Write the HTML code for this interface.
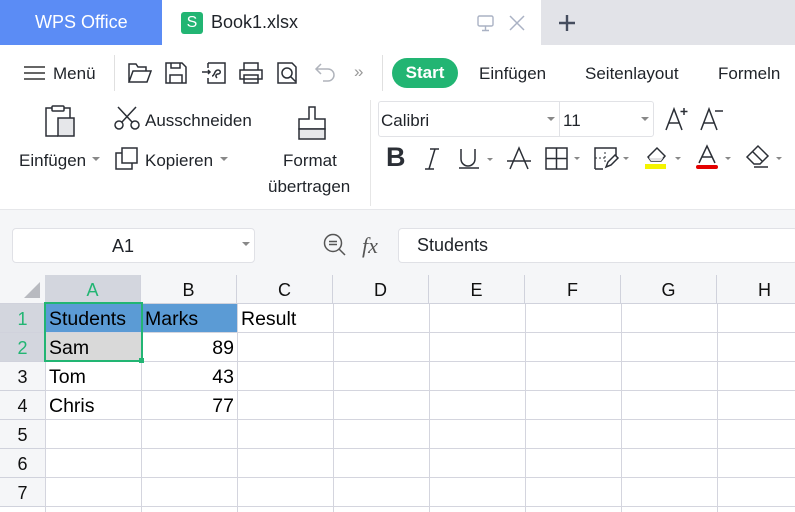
<!DOCTYPE html>
<html><head><meta charset="utf-8"><style>
*{margin:0;padding:0;box-sizing:border-box}
body{width:795px;height:512px;overflow:hidden;background:#fff;font-family:"Liberation Sans",sans-serif;color:#222;position:relative}
.a{position:absolute}
.t{position:absolute;font-size:17px;color:#1f2329;white-space:nowrap}
svg{position:absolute;overflow:visible}
.ln{fill:none;stroke:#2b2f36;stroke-width:1.5}
.hd{position:absolute;top:275px;height:29px;text-align:center;line-height:31px;font-size:18px;color:#111;border-right:1px solid #d0d2dc;background:#f5f6f8}
.rh{position:absolute;left:0;width:45px;height:29px;text-align:center;line-height:30px;font-size:18px;color:#111;background:#f5f6f8;border-bottom:1px solid #d0d2dc}
.c{position:absolute;font-size:19.5px;color:#000;line-height:29px;height:29px}
</style></head><body>
<div class="a" style="left:0;top:0;width:162px;height:45px;background:#5b8cf5"></div>
<div class="t" style="left:35px;top:12px;color:#fff;font-size:18px">WPS Office</div>
<div class="a" style="left:541px;top:0;width:254px;height:45px;background:#e2e3e8"></div>
<div class="a" style="left:181px;top:12px;width:22px;height:22px;background:#22b573;border-radius:3px;color:#fff;font-size:16px;text-align:center;line-height:22px">S</div>
<div class="t" style="left:211px;top:12px;font-size:18px">Book1.xlsx</div>
<svg style="left:477px;top:15px" width="18" height="18"><rect x="1" y="1" width="15" height="10" rx="1.5" fill="none" stroke="#aab2c4" stroke-width="1.4"/><path d="M8.5 11v4M5 15.5h7" stroke="#aab2c4" stroke-width="1.4"/></svg>
<svg style="left:509px;top:15px" width="16" height="16"><path d="M1 1l14 14M15 1L1 15" stroke="#aab2c4" stroke-width="1.5"/></svg>
<svg style="left:558px;top:14px" width="18" height="18"><path d="M9 1v16M1 9h16" stroke="#454d5e" stroke-width="2.4"/></svg>
<svg style="left:24px;top:66px" width="22" height="14"><path d="M0 1h21M0 7h21M0 13h21" stroke="#333" stroke-width="1.4"/></svg>
<div class="t" style="left:53px;top:64px">Menü</div>
<div class="a" style="left:114px;top:55px;width:1px;height:36px;background:#e0e0e0"></div>
<svg style="left:128px;top:62px" width="24" height="22"><path class="ln" d="M1 20V2h7l2 3h8v4M1 20l4-11h18l-4 11z"/></svg>
<svg style="left:165px;top:62px" width="22" height="22"><path class="ln" d="M1 1h16l4 4v16H1zM5 21v-8h12v8M6 1v5h9V1"/></svg>
<svg style="left:202px;top:62px" width="24" height="22"><path class="ln" d="M6 1h17v20H6v-5M6 6V1M0 10h8M6 8l2 2-2 2M10 14c3 0 2-6 6-6 3 0 3 4 0 4-2 0-3 2-1 4"/></svg>
<svg style="left:239px;top:62px" width="24" height="22"><path class="ln" d="M5 8V1h14v7M1 8h22v9H1zM5 13h14v8H5z"/></svg>
<svg style="left:277px;top:62px" width="24" height="22"><path class="ln" d="M1 1h14l4 4v16H1z"/><circle cx="10" cy="11" r="5" class="ln"/><path class="ln" d="M13.5 14.5l5 5"/></svg>
<svg style="left:314px;top:63px" width="22" height="20"><path d="M7 1L2 6l5 5M2 6h12a6 6 0 010 12H9" fill="none" stroke="#b0b4bc" stroke-width="1.5"/></svg>
<div class="t" style="left:354px;top:62px;color:#999;font-size:17px">»</div>
<div class="a" style="left:382px;top:55px;width:1px;height:36px;background:#e0e0e0"></div>
<div class="a" style="left:392px;top:58px;width:66px;height:30px;border-radius:15px;background:#22b573;color:#fff;font-weight:bold;font-size:17px;text-align:center;line-height:30px">Start</div>
<div class="t" style="left:479px;top:64px">Einfügen</div>
<div class="t" style="left:585px;top:64px">Seitenlayout</div>
<div class="t" style="left:718px;top:64px">Formeln</div>
<svg style="left:44px;top:104px" width="34" height="36"><path class="ln" d="M14 32H2V4h6M20 4h6v10"/><rect x="8" y="2" width="12" height="5" rx="1" class="ln"/><rect x="14" y="14" width="16" height="18" fill="#e6e7ea" stroke="#2b2f36" stroke-width="1.5"/></svg>
<div class="t" style="left:19px;top:151px">Einfügen</div>
<div class="a" style="left:92px;top:157px;border:4px solid transparent;border-top-color:#888"></div>
<svg style="left:114px;top:106px" width="26" height="24"><circle cx="5" cy="19" r="4" class="ln"/><circle cx="21" cy="19" r="4" class="ln"/><path class="ln" d="M8 16L22 1M18 16L4 1"/></svg>
<div class="t" style="left:145px;top:111px">Ausschneiden</div>
<svg style="left:115px;top:147px" width="24" height="24"><rect x="7" y="1" width="15" height="15" fill="#fff" class="ln"/><path class="ln" d="M7 6H1v16h16v-6"/></svg>
<div class="t" style="left:145px;top:151px">Kopieren</div>
<div class="a" style="left:220px;top:157px;border:4px solid transparent;border-top-color:#888"></div>
<svg style="left:295px;top:105px" width="34" height="36"><path class="ln" d="M14 2h6v12h10v10H4V14h10z"/><rect x="4" y="24" width="26" height="10" fill="#e6e7ea" stroke="#2b2f36" stroke-width="1.5"/></svg>
<div class="t" style="left:283px;top:151px">Format</div>
<div class="t" style="left:268px;top:177px">übertragen</div>
<div class="a" style="left:370px;top:100px;width:1px;height:106px;background:#e6e6e6"></div>
<div class="a" style="left:378px;top:101px;width:276px;height:36px;border:1px solid #e1e2e6;border-radius:3px"></div>
<div class="a" style="left:559px;top:101px;width:1px;height:36px;background:#e1e2e6"></div>
<div class="t" style="left:381px;top:111px">Calibri</div>
<div class="a" style="left:547px;top:117px;border:4px solid transparent;border-top-color:#888"></div>
<div class="t" style="left:563px;top:111px">11</div>
<div class="a" style="left:641px;top:117px;border:4px solid transparent;border-top-color:#888"></div>
<svg style="left:665px;top:106px" width="60" height="26"><path class="ln" d="M1 24L9 3l8 21M4 17h10M19 2v7M15.5 5.5h7M36 24l8-21 8 21M39 17h10M50 5h8"/></svg>
<div class="t" style="left:386px;top:142px;font-size:27px;font-weight:bold;color:#2b2f36">B</div>
<svg style="left:424px;top:148px" width="16" height="22"><path d="M6 1h9M1 21h9M11 1L5 21" fill="none" stroke="#2b2f36" stroke-width="1.5"/></svg>
<svg style="left:458px;top:148px" width="40" height="22"><path class="ln" d="M3 1v10a7 7 0 0014 0V1M1 20h20"/><path d="M29 10h6l-3 3z" fill="#888"/></svg>
<svg style="left:507px;top:147px" width="24" height="24"><path class="ln" d="M3 22l9-21 9 21M0 14h24"/></svg>
<svg style="left:545px;top:147px" width="40" height="24"><rect x="1" y="1" width="21" height="21" class="ln"/><path class="ln" d="M11.5 1v21M1 11.5h21"/><path d="M29 10h6l-3 3z" fill="#888"/></svg>
<svg style="left:594px;top:147px" width="40" height="24"><path d="M1 22V1h21v8M1 22h8" fill="none" stroke="#2b2f36" stroke-width="1.5"/><path d="M1 11h10M11 5v12" stroke="#2b2f36" stroke-dasharray="2 2"/><path class="ln" d="M12 20l2-5 7-7 3 3-7 7z"/><path d="M29 10h6l-3 3z" fill="#888"/></svg>
<svg style="left:645px;top:145px" width="42" height="26"><path class="ln" d="M3 12l9-9 8 8-4 5H6z"/><path d="M4 13h14l-2 3H6z" fill="#e2e2e4"/><rect x="0" y="19" width="21" height="5" fill="#f4f400"/><path d="M30 12h6l-3 3z" fill="#888"/></svg>
<svg style="left:696px;top:145px" width="42" height="26"><path class="ln" d="M3 18l8-17 8 17M6 12h10"/><rect x="0" y="20" width="22" height="4" rx="2" fill="#e40000"/><path d="M29 12h6l-3 3z" fill="#888"/></svg>
<svg style="left:746px;top:145px" width="42" height="26"><path class="ln" d="M1 12L12 1l10 10-8 8H8zM7 7l10 10M8 22h14"/><path d="M30 12h6l-3 3z" fill="#888"/></svg>
<div class="a" style="left:0;top:209px;width:795px;height:66px;background:#f5f6f8;border-top:1px solid #e6e7ea"></div>
<div class="a" style="left:12px;top:228px;width:243px;height:35px;background:#fff;border:1px solid #e0e1e6;border-radius:4px"></div>
<div class="t" style="left:112px;top:236px;font-size:18px">A1</div>
<div class="a" style="left:242px;top:242px;border:4px solid transparent;border-top-color:#888"></div>
<svg style="left:323px;top:233px" width="26" height="26"><circle cx="10" cy="10" r="8.5" fill="none" stroke="#555" stroke-width="1.5"/><path d="M6 8.5h8M6 11.5h8M16 16l6 6" stroke="#555" stroke-width="1.5"/></svg>
<div class="t" style="left:362px;top:233px;font-size:22px;font-style:italic;color:#555;font-family:'Liberation Serif',serif">fx</div>
<div class="a" style="left:398px;top:228px;width:400px;height:35px;background:#fff;border:1px solid #e0e1e6;border-radius:4px"></div>
<div class="t" style="left:417px;top:235px;font-size:18px">Students</div>
<div class="hd" style="left:0;width:45px;border-right:none"></div>
<svg style="left:24px;top:282px" width="16" height="16"><path d="M16 0v16H0z" fill="#b8bac0"/></svg>
<div class="hd" style="left:45px;width:96px;background:#d3d6de;color:#22b573">A</div>
<div class="hd" style="left:141px;width:96px">B</div>
<div class="hd" style="left:237px;width:96px">C</div>
<div class="hd" style="left:333px;width:96px">D</div>
<div class="hd" style="left:429px;width:96px">E</div>
<div class="hd" style="left:525px;width:96px">F</div>
<div class="hd" style="left:621px;width:96px">G</div>
<div class="hd" style="left:717px;width:96px">H</div>
<div class="a" style="left:0;top:303px;width:795px;height:1px;background:#d0d2dc"></div>
<svg style="left:0;top:304px" width="795" height="208">
<g stroke="#d4d5de" stroke-width="1">
<path d="M45.5 0v208M141.5 0v208M237.5 0v208M333.5 0v208M429.5 0v208M525.5 0v208M621.5 0v208M717.5 0v208"/>
<path d="M45 28.5h750M45 57.5h750M45 86.5h750M45 115.5h750M45 144.5h750M45 173.5h750M45 202.5h750"/>
</g></svg>
<div class="rh" style="top:304px;background:#d3d6de;color:#22b573">1</div>
<div class="rh" style="top:333px;background:#d3d6de;color:#22b573">2</div>
<div class="rh" style="top:362px">3</div>
<div class="rh" style="top:391px">4</div>
<div class="rh" style="top:420px">5</div>
<div class="rh" style="top:449px">6</div>
<div class="rh" style="top:478px">7</div>
<div class="a" style="left:45px;top:304px;width:192px;height:28px;background:#5b9bd5"></div>
<div class="a" style="left:45px;top:333px;width:96px;height:28px;background:#d9d9d9"></div>
<div class="c" style="left:49px;top:305px">Students</div>
<div class="c" style="left:145px;top:305px">Marks</div>
<div class="c" style="left:241px;top:305px">Result</div>
<div class="c" style="left:49px;top:334px">Sam</div>
<div class="c" style="left:141px;width:93px;text-align:right;top:334px">89</div>
<div class="c" style="left:49px;top:363px">Tom</div>
<div class="c" style="left:141px;width:93px;text-align:right;top:363px">43</div>
<div class="c" style="left:49px;top:392px">Chris</div>
<div class="c" style="left:141px;width:93px;text-align:right;top:392px">77</div>
<div class="a" style="left:44px;top:302px;width:99px;height:60px;border:2px solid #22b573"></div>
<div class="a" style="left:139px;top:358px;width:5px;height:5px;background:#22b573"></div>
</body></html>
